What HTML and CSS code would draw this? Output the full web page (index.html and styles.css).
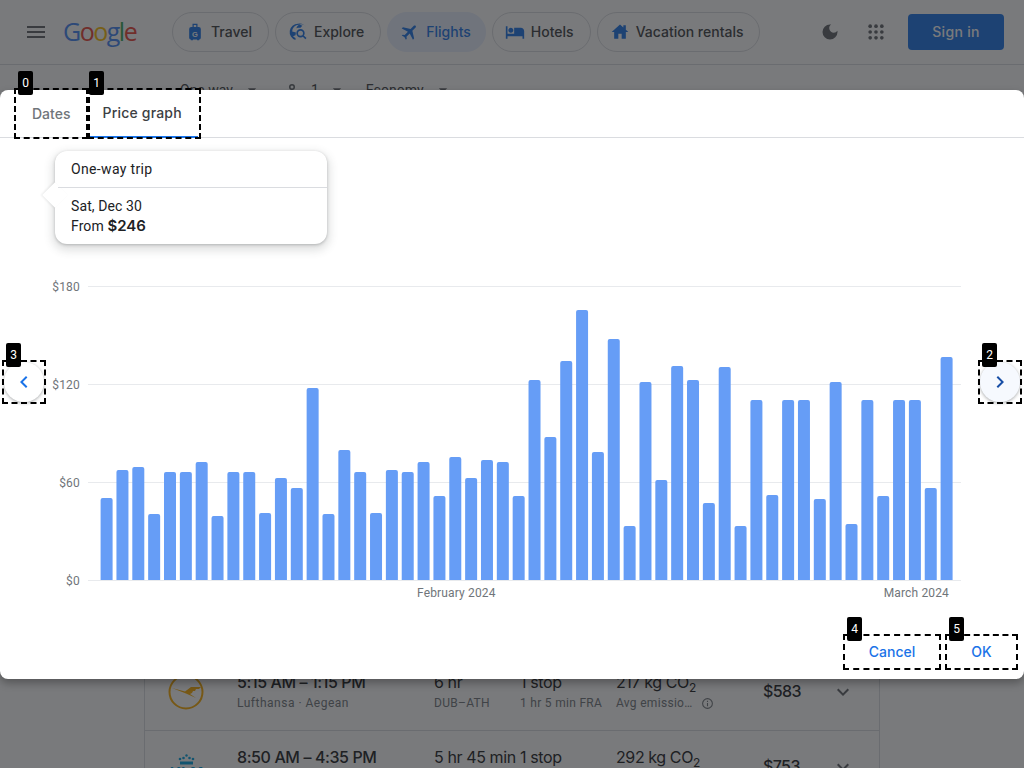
FILE: index.html
```html
<!DOCTYPE html>
<html lang="en">
<head>
<meta charset="utf-8">
<title>Flights price graph</title>
<link rel="stylesheet" href="styles.css">
</head>
<body>
<div class="page">
  <header class="topbar">
    <svg class="menu-icon" viewBox="0 0 24 24"><path d="M3 18h18v-2H3v2zm0-5h18v-2H3v2zm0-7v2h18V6H3z"/></svg>
    <div class="logo"><span class="g-blue">G</span><span class="g-red">o</span><span class="g-yellow">o</span><span class="g-blue">g</span><span class="g-green">l</span><span class="g-red">e</span></div>
    <nav class="pills">
      <a class="pill">
        <svg class="pill-icon" viewBox="0 0 24 24"><path d="M9 2h6v4h1.500A2.500 2.500 0 0 1 19 8.500V19a2 2 0 0 1-2 2v1h-2.500v-1h-5v1H7v-1a2 2 0 0 1-2-2V8.500A2.500 2.500 0 0 1 7.500 6H9V2zm1.500 1.500V6h3V3.500h-3z"/><text x="12" y="17.500" class="case-letter">G</text></svg>
        <span>Travel</span>
      </a>
      <a class="pill">
        <svg class="pill-icon" viewBox="0 0 24 24"><path d="M12 2a10 10 0 0 0-3 19.540V19.300a7.800 7.800 0 0 1-3-2.300l3-1 .5-3.500-4.500-1a8 8 0 0 1 8-8.300c1.500 0 3 .4 4.200 1.200L15 7h-3a6 6 0 0 0-2 .5 6.500 6.500 0 0 1 11.900-1.500A10 10 0 0 0 12 2z"/><circle cx="15" cy="13.500" r="4" class="mag"/><path d="M18 16.500l3.500 3.500" class="mag"/></svg>
        <span>Explore</span>
      </a>
      <a class="pill pill-active">
        <svg class="pill-icon icon-plane" viewBox="0 0 24 24"><path d="M21 16v-2l-8-5V3.500c0-.83-.67-1.500-1.500-1.500S10 2.670 10 3.500V9l-8 5v2l8-2.500V19l-2 1.500V22l3.500-1 3.500 1v-1.500L13 19v-5.500l8 2.500z"/></svg>
        <span>Flights</span>
      </a>
      <a class="pill">
        <svg class="pill-icon" viewBox="0 0 24 24"><path d="M7 13c1.660 0 3-1.340 3-3S8.660 7 7 7s-3 1.340-3 3 1.340 3 3 3zm12-6h-8v7H3V5H1v15h2v-3h18v3h2v-9c0-2.210-1.790-4-4-4z"/></svg>
        <span>Hotels</span>
      </a>
      <a class="pill">
        <svg class="pill-icon" viewBox="0 0 24 24"><path d="M10 20v-6h4v6h5v-8h3l-3-2.700V4h-3v2.600L12 3 2 12h3v8z"/></svg>
        <span>Vacation rentals</span>
      </a>
    </nav>
    <div class="top-actions">
      <svg class="tool-icon tool-moon" viewBox="0 0 24 24"><path d="M12 3a9 9 0 1 0 9 9c0-.46-.04-.92-.1-1.360a5.390 5.390 0 0 1-4.400 2.260 5.400 5.400 0 0 1-3.140-9.800c-.44-.06-.9-.1-1.360-.1z"/></svg>
      <svg class="tool-icon tool-apps" viewBox="0 0 24 24"><circle cx="5" cy="5" r="2.200"/><circle cx="12" cy="5" r="2.200"/><circle cx="19" cy="5" r="2.200"/><circle cx="5" cy="12" r="2.200"/><circle cx="12" cy="12" r="2.200"/><circle cx="19" cy="12" r="2.200"/><circle cx="5" cy="19" r="2.200"/><circle cx="12" cy="19" r="2.200"/><circle cx="19" cy="19" r="2.200"/></svg>
      <button class="signin">Sign in</button>
    </div>
  </header>

  <div class="filters">
    <span class="filter filter-trip">One way<svg class="caret" viewBox="0 0 24 24"><path d="M7 10l5 5 5-5z"/></svg></span>
    <span class="filter filter-people"><svg class="person" viewBox="0 0 24 24"><path d="M12 6a2 2 0 1 1 0 4 2 2 0 0 1 0-4zm0-2a4 4 0 1 0 0 8 4 4 0 0 0 0-8zm0 9c-2.670 0-8 1.340-8 4v3h16v-3c0-2.660-5.330-4-8-4z"/></svg>1<svg class="caret caret-tight" viewBox="0 0 24 24"><path d="M7 10l5 5 5-5z"/></svg></span>
    <span class="filter filter-class">Economy<svg class="caret" viewBox="0 0 24 24"><path d="M7 10l5 5 5-5z"/></svg></span>
  </div>

  <section class="flights">
    <article class="flight">
      <svg class="airline" viewBox="0 0 40 40"><circle cx="20" cy="20" r="16.500" class="lh-ring"/><path class="lh-bird" d="M6 16l13 3.500L25 15h10l-2 2h-3l-1 2h-2l-1 2-2 1 6 4-10-4.500z"/></svg>
      <div class="cell">
        <div class="main-line">5:15 AM – 1:15 PM</div>
        <div class="sub-line">Lufthansa · Aegean</div>
      </div>
      <div class="cell">
        <div class="main-line">6 hr</div>
        <div class="sub-line">DUB–ATH</div>
      </div>
      <div class="cell">
        <div class="main-line">1 stop</div>
        <div class="sub-line">1 hr 5 min FRA</div>
      </div>
      <div class="cell">
        <div class="main-line">217 kg CO<sub>2</sub></div>
        <div class="sub-line">Avg emissio… <svg class="info" viewBox="0 0 24 24"><path d="M11 7h2v2h-2zm0 4h2v6h-2zm1-9a10 10 0 1 0 0 20 10 10 0 0 0 0-20zm0 18a8 8 0 1 1 0-16 8 8 0 0 1 0 16z"/></svg></div>
      </div>
      <div class="price">$583</div>
      <svg class="expand" viewBox="0 0 24 24"><path d="M16.590 8.590 12 13.170 7.410 8.590 6 10l6 6 6-6z"/></svg>
    </article>
    <article class="flight">
      <svg class="airline" viewBox="0 0 40 40"><circle cx="20.500" cy="8.500" r="1.200" class="klm"/><circle cx="14" cy="12" r="1.300" class="klm"/><circle cx="17.500" cy="11" r="1.300" class="klm"/><circle cx="23.500" cy="11" r="1.300" class="klm"/><circle cx="27" cy="12" r="1.300" class="klm"/><rect x="14" y="14.500" width="13" height="3" class="klm"/><text x="20.500" y="30" class="klm-text">KLM</text></svg>
      <div class="cell">
        <div class="main-line">8:50 AM – 4:35 PM</div>
      </div>
      <div class="cell">
        <div class="main-line">5 hr 45 min</div>
      </div>
      <div class="cell">
        <div class="main-line">1 stop</div>
      </div>
      <div class="cell">
        <div class="main-line">292 kg CO<sub>2</sub></div>
      </div>
      <div class="price">$753</div>
      <svg class="expand" viewBox="0 0 24 24"><path d="M16.590 8.590 12 13.170 7.410 8.590 6 10l6 6 6-6z"/></svg>
    </article>
  </section>
</div>

<div class="scrim"></div>

<div class="dialog">
  <div class="tabs">
    <button class="tab">Dates</button>
    <button class="tab tab-active">Price graph</button>
  </div>

  <div class="tooltip">
    <div class="tooltip-title">One-way trip</div>
    <div class="tooltip-body">
      <div>Sat, Dec 30</div>
      <div>From <b class="tooltip-price">$246</b></div>
    </div>
  </div>

  <div class="chart">
    <div class="grid-row"><span class="axis">$180</span><i class="grid-line"></i></div>
    <div class="grid-row"><span class="axis">$120</span><i class="grid-line"></i></div>
    <div class="grid-row"><span class="axis">$60</span><i class="grid-line"></i></div>
    <div class="grid-row"><span class="axis">$0</span><i class="grid-line"></i></div>
    <svg class="bars" viewBox="88 286 873 294">
      <rect x="100.6" y="498" width="12" height="90"/>
      <rect x="116.45" y="470" width="12" height="118"/>
      <rect x="132.3" y="467" width="12" height="121"/>
      <rect x="148.15" y="514" width="12" height="74"/>
      <rect x="164" y="472" width="12" height="116"/>
      <rect x="179.85" y="472" width="12" height="116"/>
      <rect x="195.69" y="462" width="12" height="126"/>
      <rect x="211.54" y="516" width="12" height="72"/>
      <rect x="227.39" y="472" width="12" height="116"/>
      <rect x="243.24" y="472" width="12" height="116"/>
      <rect x="259.09" y="513" width="12" height="75"/>
      <rect x="274.94" y="478" width="12" height="110"/>
      <rect x="290.79" y="488" width="12" height="100"/>
      <rect x="306.64" y="388" width="12" height="200"/>
      <rect x="322.49" y="514" width="12" height="74"/>
      <rect x="338.34" y="450" width="12" height="138"/>
      <rect x="354.18" y="472" width="12" height="116"/>
      <rect x="370.03" y="513" width="12" height="75"/>
      <rect x="385.88" y="470" width="12" height="118"/>
      <rect x="401.73" y="472" width="12" height="116"/>
      <rect x="417.58" y="462" width="12" height="126"/>
      <rect x="433.43" y="496" width="12" height="92"/>
      <rect x="449.28" y="457" width="12" height="131"/>
      <rect x="465.13" y="478" width="12" height="110"/>
      <rect x="480.98" y="460" width="12" height="128"/>
      <rect x="496.83" y="462" width="12" height="126"/>
      <rect x="512.67" y="496" width="12" height="92"/>
      <rect x="528.52" y="380" width="12" height="208"/>
      <rect x="544.37" y="437" width="12" height="151"/>
      <rect x="560.22" y="361" width="12" height="227"/>
      <rect x="576.07" y="310" width="12" height="278"/>
      <rect x="591.92" y="452" width="12" height="136"/>
      <rect x="607.77" y="339" width="12" height="249"/>
      <rect x="623.62" y="526" width="12" height="62"/>
      <rect x="639.47" y="382" width="12" height="206"/>
      <rect x="655.32" y="480" width="12" height="108"/>
      <rect x="671.16" y="366" width="12" height="222"/>
      <rect x="687.01" y="380" width="12" height="208"/>
      <rect x="702.86" y="503" width="12" height="85"/>
      <rect x="718.71" y="367" width="12" height="221"/>
      <rect x="734.56" y="526" width="12" height="62"/>
      <rect x="750.41" y="400" width="12" height="188"/>
      <rect x="766.26" y="495" width="12" height="93"/>
      <rect x="782.11" y="400" width="12" height="188"/>
      <rect x="797.96" y="400" width="12" height="188"/>
      <rect x="813.81" y="499" width="12" height="89"/>
      <rect x="829.65" y="382" width="12" height="206"/>
      <rect x="845.5" y="524" width="12" height="64"/>
      <rect x="861.35" y="400" width="12" height="188"/>
      <rect x="877.2" y="496" width="12" height="92"/>
      <rect x="893.05" y="400" width="12" height="188"/>
      <rect x="908.9" y="400" width="12" height="188"/>
      <rect x="924.75" y="488" width="12" height="100"/>
      <rect x="940.6" y="357" width="12" height="231"/>
    </svg>
  </div>

  <div class="months"><span>February 2024</span><span>March 2024</span></div>

  <div class="actions">
    <button class="text-btn btn-cancel">Cancel</button>
    <button class="text-btn btn-ok">OK</button>
  </div>

  <button class="round-btn round-prev"><svg viewBox="0 0 24 24"><path d="M15.410 7.410 14 6l-6 6 6 6 1.410-1.410L10.830 12z"/></svg></button>
  <button class="round-btn round-next"><svg viewBox="0 0 24 24"><path d="M10 6 8.590 7.410 13.170 12l-4.580 4.590L10 18l6-6z"/></svg></button>
</div>

<div class="mark mark-0"><span class="tag">0</span></div>
<div class="mark mark-1"><span class="tag tag-near">1</span></div>
<div class="mark mark-2"><span class="tag">2</span></div>
<div class="mark mark-3"><span class="tag">3</span></div>
<div class="mark mark-4"><span class="tag">4</span></div>
<div class="mark mark-5"><span class="tag">5</span></div>
</body>
</html>
```
FILE: styles.css
```css
* { box-sizing: border-box; }

html, body {
  margin: 0;
  height: 768px;
  overflow: hidden;
}

body {
  background: #fff;
  color: #202124;
  font-family: Roboto, "Liberation Sans", sans-serif;
  position: relative;
}

button {
  border: 0;
  background: none;
  padding: 0;
  font: inherit;
}

.page { width: 1024px; }

/* Header */
.topbar {
  display: flex;
  align-items: center;
  height: 65px;
  padding-left: 24px;
  border-bottom: 1px solid #dadce0;
}

.menu-icon {
  width: 24px;
  height: 24px;
  fill: #5f6368;
}

.logo {
  width: 76px;
  margin-left: 15px;
  margin-bottom: 2px;
  font-family: "Open Sans", sans-serif;
  font-size: 25px;
  line-height: 32px;
  letter-spacing: -1.5px;
}

.g-blue { color: #4285f4; }
.g-red { color: #ea4335; }
.g-yellow { color: #fbbc04; }
.g-green { color: #34a853; }

.pills {
  display: flex;
  gap: 6px;
  margin-left: 33px;
}

.pill {
  display: flex;
  align-items: center;
  height: 40px;
  padding: 0 16px 0 12px;
  border: 1px solid #dadce0;
  border-radius: 20px;
  color: #3c4043;
  font-family: Inter, sans-serif;
  font-size: 14px;
  font-weight: 500;
}

.pill span { margin-bottom: 2px; }

.pill-active {
  padding-right: 14px;
  background: #e8f0fe;
  border-color: #e8f0fe;
  color: #1a73e8;
}

.pill-icon {
  width: 20px;
  height: 20px;
  margin-right: 6px;
  fill: #1a73e8;
}

.icon-plane { transform: rotate(45deg); }

.case-letter {
  fill: #fff;
  font-family: "Liberation Sans", sans-serif;
  font-size: 9px;
  font-weight: 700;
  text-anchor: middle;
}

.mag {
  fill: none;
  stroke: #1a73e8;
  stroke-width: 2;
}

.top-actions {
  display: flex;
  align-items: center;
  margin-left: auto;
  margin-right: 20px;
}

.tool-icon {
  width: 20px;
  height: 20px;
  fill: #5f6368;
}

.tool-moon { margin-right: 26px; }
.tool-apps { margin-right: 22px; }

.signin {
  width: 96px;
  height: 36px;
  padding-bottom: 2px;
  border-radius: 4px;
  background: #1a73e8;
  color: #fff;
  font-family: Inter, sans-serif;
  font-size: 14px;
  font-weight: 500;
  letter-spacing: .3px;
}

/* Filters behind the dialog */
.filters {
  display: flex;
  align-items: center;
  height: 50px;
  padding-left: 180px;
  color: #3c4043;
  font-size: 14px;
}

.filter {
  display: flex;
  align-items: center;
}

.filter-people { margin-left: 21px; }
.filter-class { margin-left: 19px; }

.caret {
  width: 20px;
  height: 20px;
  margin-left: 9px;
  fill: #5f6368;
}

.caret-tight { margin-left: 8px; }

.person {
  width: 18px;
  height: 18px;
  margin-right: 10px;
  fill: #5f6368;
}

/* Flight list behind the dialog */
.flights {
  width: 736px;
  margin: 541px 0 0 144px;
  border-left: 1px solid #dadce0;
  border-right: 1px solid #dadce0;
}

.flight {
  display: grid;
  grid-template-columns: 92px 197px 86px 96px 147px 68px 24px;
  height: 75px;
  padding-top: 16px;
  border-bottom: 1px solid #dadce0;
}

.airline {
  width: 40px;
  height: 40px;
  margin: 0 0 0 21px;
}

.lh-ring {
  fill: none;
  stroke: #f9ab00;
  stroke-width: 2;
}

.lh-bird { fill: #f9ab00; }
.klm { fill: #00a1de; }

.klm-text {
  fill: #00a1de;
  font-family: "Liberation Sans", sans-serif;
  font-size: 15.5px;
  font-weight: 700;
  text-anchor: middle;
}

.main-line {
  height: 20px;
  font-family: Inter, sans-serif;
  font-size: 16px;
  line-height: 20px;
  letter-spacing: -.4px;
  white-space: nowrap;
}

.cell:nth-of-type(1) .main-line { font-weight: 500; }

.main-line sub {
  font-size: 12px;
  line-height: 0;
}

.sub-line {
  margin-top: 1px;
  color: #70757a;
  font-size: 12px;
  line-height: 20px;
  letter-spacing: .3px;
  white-space: nowrap;
}

.cell:nth-of-type(1) .sub-line { letter-spacing: .5px; }

.info {
  width: 13px;
  height: 13px;
  margin-left: 5px;
  vertical-align: -3px;
  fill: #70757a;
}

.price {
  font-family: Inter, sans-serif;
  font-size: 16px;
  font-weight: 500;
  line-height: 38px;
  letter-spacing: -.6px;
}

.expand {
  width: 24px;
  height: 24px;
  margin-top: 8px;
  fill: #5f6368;
}

.scrim {
  position: absolute;
  inset: 0;
  background: rgba(32, 33, 36, .6);
}

/* Dialog */
.dialog {
  position: absolute;
  top: 90px;
  left: 0;
  width: 1024px;
  background: #fff;
  border-radius: 8px;
  box-shadow: 0 4px 8px rgba(0, 0, 0, .3);
}

.tabs {
  display: flex;
  height: 48px;
  padding-left: 16px;
  border-bottom: 1px solid #dadce0;
}

.tab {
  height: 48px;
  padding: 0 16px 2px;
  color: #70757a;
  font-family: Inter, sans-serif;
  font-size: 14px;
  font-weight: 500;
}

.tab-active {
  color: #3c4043;
  border-bottom: 2px solid #1a73e8;
  letter-spacing: .2px;
}

.tooltip {
  position: absolute;
  top: 61px;
  left: 55px;
  width: 272px;
  height: 93px;
  background: #fff;
  border-radius: 12px;
  box-shadow: 0 1px 3px rgba(60, 64, 67, .3), 0 4px 8px 3px rgba(60, 64, 67, .15);
  font-size: 14px;
  color: #202124;
}

.tooltip::before {
  content: "";
  position: absolute;
  top: 35px;
  left: -9px;
  width: 18px;
  height: 18px;
  background: #fff;
  transform: rotate(45deg);
  box-shadow: -1px 1px 2px rgba(60, 64, 67, .1);
}

.tooltip-title {
  position: relative;
  height: 37px;
  margin-left: 3px;
  padding-left: 13px;
  border-bottom: 1px solid #dadce0;
  line-height: 37px;
  letter-spacing: .35px;
}

.tooltip-body {
  position: relative;
  padding: 8px 16px 0;
  line-height: 20px;
  letter-spacing: .1px;
}

.tooltip-price {
  font-family: Inter, sans-serif;
  font-size: 15px;
  font-weight: 600;
  letter-spacing: 0;
}

.chart {
  position: relative;
  height: 307px;
  margin-top: 141px;
}

.grid-row {
  display: grid;
  grid-template-columns: 80px 873px;
  column-gap: 8px;
  align-items: start;
  height: 16px;
  margin-bottom: 82px;
}

.axis {
  color: #70757a;
  font-size: 12px;
  line-height: 16px;
  letter-spacing: .2px;
  text-align: right;
}

.grid-line {
  height: 1px;
  margin-top: 7px;
  background: #e8eaed;
}

.bars {
  position: absolute;
  top: 7px;
  left: 88px;
  width: 873px;
  height: 294px;
  fill: #669df6;
}

.bars rect {
  rx: 2px;
  ry: 2px;
}

.months {
  display: flex;
  justify-content: space-between;
  margin: 0 75px 0 417px;
  color: #70757a;
  font-size: 12px;
  line-height: 14px;
  letter-spacing: .15px;
}

.actions {
  display: flex;
  justify-content: flex-end;
  gap: 8px;
  padding: 36px 8px 11px 0;
}

.text-btn {
  height: 32px;
  padding-bottom: 2px;
  color: #1a73e8;
  font-family: Inter, sans-serif;
  font-size: 14px;
  font-weight: 500;
}

.btn-cancel { width: 94px; }
.btn-ok { width: 69px; }

.round-btn {
  position: absolute;
  top: 272px;
  display: flex;
  align-items: center;
  justify-content: center;
  width: 40px;
  height: 40px;
  border-radius: 50%;
  background: #fff;
  box-shadow: 0 1px 3px rgba(60, 64, 67, .3), 0 1px 3px 1px rgba(60, 64, 67, .1);
}

.round-btn svg {
  width: 24px;
  height: 24px;
  fill: #1a73e8;
}

.round-prev { left: 4px; }

.round-next {
  left: 980px;
  background: #f6f9fe;
}

.round-next svg { fill: #174ea6; }

/* Numbered dashed annotations */
.mark {
  position: absolute;
  border: 2px dashed #000;
}

.mark::before {
  content: "";
  position: absolute;
  inset: -2px;
  z-index: -1;
  border: 2px solid #fff;
}

.mark-0 { top: 88px; left: 14px; width: 74px; height: 51px; }
.mark-1 { top: 88px; left: 88px; width: 113px; height: 51px; }
.mark-2 { top: 360px; left: 978px; width: 44px; height: 44px; }
.mark-3 { top: 360px; left: 2px; width: 44px; height: 44px; }
.mark-4 { top: 634px; left: 843px; width: 98px; height: 36px; }
.mark-5 { top: 634px; left: 945px; width: 73px; height: 36px; }

.tag {
  position: absolute;
  top: -19px;
  left: 2px;
  width: 15px;
  height: 24px;
  border-radius: 2px;
  background: #000;
  color: #fff;
  font-size: 12px;
  line-height: 24px;
  text-align: center;
}

.tag-near { left: -1px; }
```
